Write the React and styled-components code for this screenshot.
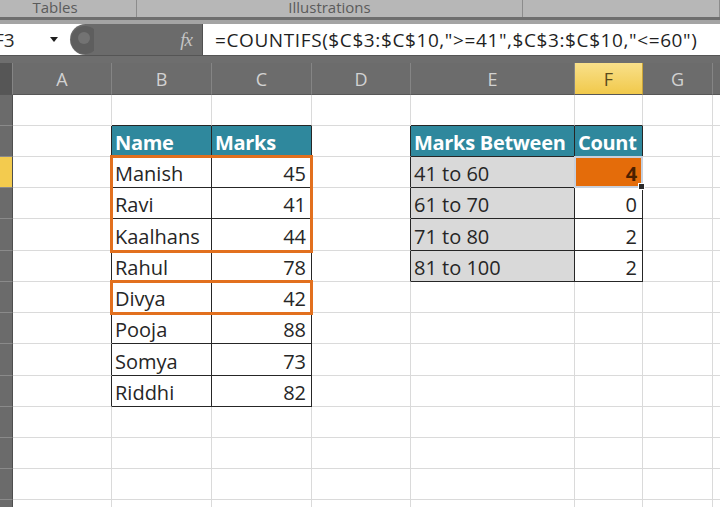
import React from 'react'
import styled, {createGlobalStyle} from 'styled-components'

const GlobalStyle = createGlobalStyle`
  html, body { margin: 0; padding: 0; background: #fff; overflow: hidden; }
  body { font-family: "Open Sans", "Liberation Sans", sans-serif; }
`

const Page = styled.div`
  width: 720px;
  height: 507px;
  overflow: hidden;
  display: flex;
  flex-direction: column;
`

const Ribbon = styled.div`
  height: 17px;
  display: grid;
  grid-template-columns: 137px 386px 1fr;
  background: #b7b7b7;
  overflow: hidden;
`

const RibbonGroup = styled.div`
  display: flex;
  align-items: flex-end;
  justify-content: center;
  padding: 0 ${p => p.$padRight || 0}px 2px 0;
  border-right: 1px solid #8c8c8c;
  font: 15px/15px "Open Sans", sans-serif;
  color: #5b5b5b;
  overflow: hidden;
`

const Seam = styled.div`
  height: 7px;
  background: #a4a4a4;
  border-top: 3px solid #6e6e6e;
  box-sizing: border-box;
`

const FormulaBar = styled.div`
  height: 31px;
  display: flex;
  background: #fff;
`

const NameBox = styled.div`
  width: 70px;
  display: flex;
  align-items: center;
  justify-content: space-between;
  padding-right: 12px;
  box-sizing: border-box;
  font-size: 19px;
  color: #2a2a2a;
  overflow: hidden;
  span { margin-left: -6px; }
`

const Caret = styled.div`
  width: 0;
  height: 0;
  border-left: 4px solid transparent;
  border-right: 4px solid transparent;
  border-top: 5px solid #1e1e1e;
`

const FxArea = styled.div`
  width: 133px;
  background: #6b6b6b;
  border-radius: 16px 0 0 16px;
  border-right: 1px solid #505050;
  display: flex;
  align-items: center;
  justify-content: space-between;
  padding: 0 10px 0 0;
  box-sizing: border-box;
`

const FxLabel = styled.span`
  font: italic 19px "Liberation Serif", serif;
  color: #c4c4c4;
  letter-spacing: -1px;
`

const FormulaInput = styled.div`
  flex: 1;
  display: flex;
  align-items: center;
  padding-left: 12px;
  font-size: 19px;
  letter-spacing: 0.6px;
  color: #1f1f1f;
  white-space: nowrap;
  overflow: hidden;
`

const Band = styled.div`
  height: 8px;
  background: #6e6e6e;
  border-top: 1px solid #555;
  box-sizing: border-box;
`

const Sheet = styled.div`
  position: relative;
  display: grid;
  grid-template-columns: 13px 99px 100px 100px 99px 164px 68px 70px 100px;
  grid-template-rows: 32px ${p => p.$rows};
  flex: 1;
  overflow: hidden;
`

const ColHead = styled.div`
  background: ${p => (p.$active ? 'linear-gradient(#f9e08a, #f1c94b)' : '#6c6c6c')};
  color: ${p => (p.$active ? '#5a4a1c' : '#d2d2d2')};
  border-right: 1px solid ${p => (p.$active ? '#c9a43a' : '#858585')};
  border-bottom: 1px solid #575757;
  box-sizing: border-box;
  display: flex;
  align-items: center;
  justify-content: center;
  font-size: 18px;
`

const Corner = styled.div`
  background: #565656;
  border-right: 1px solid #858585;
  border-bottom: 1px solid #575757;
  box-sizing: border-box;
`

const RowHead = styled.div`
  background: ${p => (p.$active ? '#f3cb4e' : '#6b6b6b')};
  border-right: 1px solid #4e4e4e;
  border-bottom: 1px solid #8a8a8a;
  box-sizing: border-box;
`

const Cell = styled.div`
  box-sizing: border-box;
  border-right: 1px solid ${p => p.$rb || '#dadada'};
  border-bottom: 1px solid ${p => p.$bb || '#dadada'};
  background: ${p => p.$bg || '#fff'};
  color: ${p => p.$fg || '#262626'};
  font-weight: ${p => (p.$bold ? 700 : 400)};
  display: flex;
  align-items: flex-end;
  justify-content: ${p => (p.$right ? 'flex-end' : 'flex-start')};
  padding: 0 5px 2px 3px;
  font-size: 20px;
  line-height: 22px;
  letter-spacing: ${p => (p.$bold ? '-0.3px' : '0')};
  white-space: nowrap;
  overflow: hidden;
`

const Outline = styled.div`
  position: absolute;
  top: -2px;
  bottom: -2px;
  left: -2px;
  right: -1px;
  border: 3px solid #e2701e;
  pointer-events: none;
`

const Selected = styled.div`
  position: absolute;
  inset: -1px 0 0 -1px;
  border: 2px solid #c8d0dc;
  pointer-events: none;
`

const FillHandle = styled.div`
  position: absolute;
  right: -4px;
  bottom: -4px;
  width: 5px;
  height: 5px;
  background: #2a2a2a;
  border: 1px solid #fff;
`

const DARK = '#262626'
const TEAL = '#2f889d'
const COLS = ['A', 'B', 'C', 'D', 'E', 'F', 'G', '']
const ROW_H = [31, 31, 31, 31, 32, 31, 31, 31, 32, 31, 31, 31, 31, 31]

const students = [
  ['Manish', 45], ['Ravi', 41], ['Kaalhans', 44], ['Rahul', 78],
  ['Divya', 42], ['Pooja', 88], ['Somya', 73], ['Riddhi', 82]
]
const ranges = [['41 to 60', 4], ['61 to 70', 0], ['71 to 80', 2], ['81 to 100', 2]]

function cellFor(r, c) {
  const inLeft = r >= 1 && r <= 9 && (c === 'B' || c === 'C')
  const inRight = r >= 1 && r <= 5 && (c === 'E' || c === 'F')
  const p = {}
  if (inLeft || inRight || (c === 'A' && r >= 1 && r <= 9) || (c === 'D' && r >= 1 && r <= 5)) p.$rb = DARK
  if (inLeft || inRight || (r === 0 && ['B', 'C', 'E', 'F'].includes(c))) p.$bb = DARK
  let text = ''
  if (r === 1 && (inLeft || inRight)) {
    text = {B: 'Name', C: 'Marks', E: 'Marks Between', F: 'Count'}[c]
    p.$bg = TEAL
    p.$fg = '#fff'
    p.$bold = true
  } else if (inLeft) {
    const s = students[r - 2]
    text = c === 'B' ? s[0] : s[1]
    p.$right = c === 'C'
  } else if (inRight) {
    const g = ranges[r - 2]
    text = c === 'E' ? g[0] : g[1]
    if (c === 'E') p.$bg = '#d9d9d9'
    p.$right = c === 'F'
    if (c === 'F' && r === 2) {
      p.$bg = '#e46c0a'
      p.$fg = '#4a2000'
      p.$bold = true
    }
  }
  return {p, text}
}

export default function App() {
  return (
    <Page>
      <GlobalStyle />
      <Ribbon>
        <RibbonGroup $padRight={26}>Tables</RibbonGroup>
        <RibbonGroup>Illustrations</RibbonGroup>
        <RibbonGroup />
      </Ribbon>
      <Seam />
      <FormulaBar>
        <NameBox><span>F3</span><Caret /></NameBox>
        <FxArea>
          <svg width="24" height="30" viewBox="0 0 24 30">
            <circle cx="15" cy="15" r="14" fill="#5e5e5e" />
            <circle cx="14" cy="13" r="6" fill="#737373" />
          </svg>
          <FxLabel>fx</FxLabel>
        </FxArea>
        <FormulaInput>=COUNTIFS($C$3:$C$10,"&gt;=41",$C$3:$C$10,"&lt;=60")</FormulaInput>
      </FormulaBar>
      <Band />
      <Sheet $rows={ROW_H.map(h => h + 'px').join(' ')}>
        <Corner />
        {COLS.map((c, i) => <ColHead key={i} $active={c === 'F'}>{c}</ColHead>)}
        {ROW_H.map((_, r) => (
          <React.Fragment key={r}>
            <RowHead $active={r === 2} />
            {COLS.map((c, i) => {
              const {p, text} = cellFor(r, c)
              return <Cell key={i} {...p}>{text}</Cell>
            })}
          </React.Fragment>
        ))}
        <Outline style={{gridColumn: '3 / 5', gridRow: '4 / 7'}} />
        <Outline style={{gridColumn: '3 / 5', gridRow: '8 / 9'}} />
        <Selected style={{gridColumn: '7 / 8', gridRow: '4 / 5'}}>
          <FillHandle />
        </Selected>
      </Sheet>
    </Page>
  )
}
